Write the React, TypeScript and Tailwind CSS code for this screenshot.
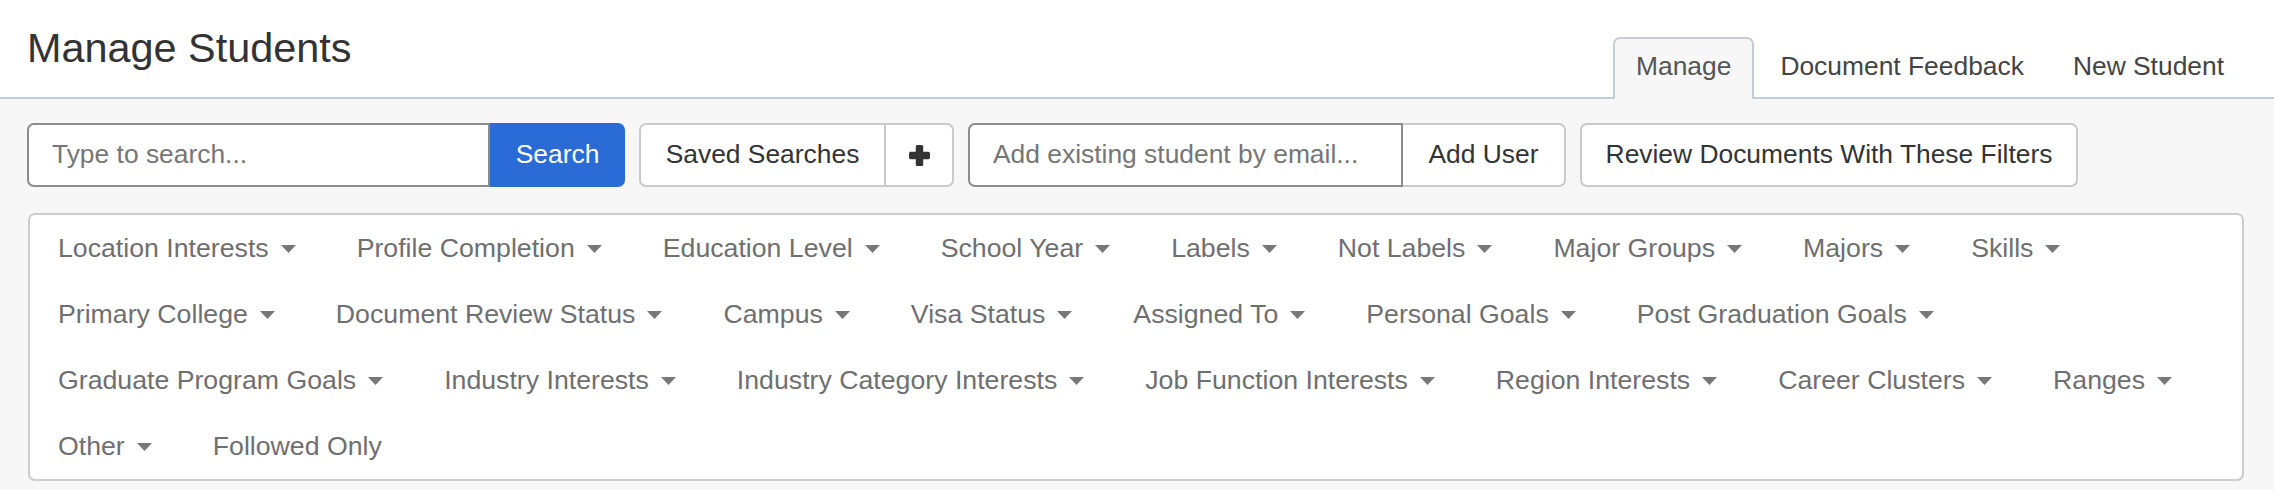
import React from "react";

const FILTERS: { label: string; caret: boolean }[] = [
  "Location Interests",
  "Profile Completion",
  "Education Level",
  "School Year",
  "Labels",
  "Not Labels",
  "Major Groups",
  "Majors",
  "Skills",
  "Primary College",
  "Document Review Status",
  "Campus",
  "Visa Status",
  "Assigned To",
  "Personal Goals",
  "Post Graduation Goals",
  "Graduate Program Goals",
  "Industry Interests",
  "Industry Category Interests",
  "Job Function Interests",
  "Region Interests",
  "Career Clusters",
  "Ranges",
  "Other",
]
  .map((label) => ({ label, caret: true }))
  .concat([{ label: "Followed Only", caret: false }]);

const TABS = ["Manage", "Document Feedback", "New Student"];

function Caret() {
  return (
    <svg width="15" height="8" viewBox="0 0 15 8" className="ml-[12px] mt-[2px] shrink-0">
      <path d="M0 0h15L7.5 8z" fill="#777777" />
    </svg>
  );
}

function PlusIcon() {
  return (
    <svg width="21" height="21" viewBox="0 0 21 21">
      <rect x="6.8" y="0" width="7.4" height="21" rx="1.6" fill="#333333" />
      <rect x="0" y="6.8" width="21" height="7.4" rx="1.6" fill="#333333" />
    </svg>
  );
}

export default function App() {
  const activeTab = "Manage";

  return (
    <div className="min-h-screen bg-[#f7f7f7] font-['Liberation_Sans',Arial,sans-serif] text-[26.4px] text-[#333333]">
      {/* header */}
      <div className="flex h-[99px] justify-between border-b-2 border-[#c4ccd5] bg-white px-[27px]">
        <h1 className="pt-[24px] text-[41.4px] leading-[48px] font-normal text-[#333333]">
          Manage Students
        </h1>
        <div className="flex items-end gap-[3px]">
          {TABS.map((tab) => (
            <div
              key={tab}
              className={
                tab === activeTab
                  ? "relative -mb-[2px] h-[62px] rounded-t-[7px] border-x-2 border-t-2 border-[#c4ccd5] bg-[#f7f7f7] px-[21px] pt-[12px] leading-[30px] text-[#555555]"
                  : "relative -mb-[2px] h-[62px] border-x-2 border-t-2 border-transparent px-[21px] pt-[12px] leading-[30px] text-[#444444]"
              }
            >
              {tab}
            </div>
          ))}
        </div>
      </div>

      {/* toolbar */}
      <div className="mt-[24px] flex h-[64px] gap-[14px] px-[27px]">
        <div className="flex">
          <input
            placeholder="Type to search..."
            className="w-[463px] rounded-l-[7px] border-2 border-[#8c8c8c] bg-white px-[23px] text-[#333333] outline-none placeholder:text-[#767676]"
          />
          <button className="w-[135px] rounded-r-[7px] bg-[#2b6bd6] text-white">Search</button>
        </div>

        <div className="flex rounded-[7px] border-2 border-[#cacaca] bg-white">
          <button className="w-[243px]">Saved Searches</button>
          <button className="flex w-[68px] items-center justify-center border-l-2 border-[#cacaca]">
            <PlusIcon />
          </button>
        </div>

        <div className="flex">
          <input
            placeholder="Add existing student by email..."
            className="w-[435px] rounded-l-[7px] border-2 border-[#8c8c8c] bg-white px-[23px] text-[#333333] outline-none placeholder:text-[#767676]"
          />
          <button className="w-[163px] rounded-r-[7px] border-2 border-l-0 border-[#cacaca] bg-white">
            Add User
          </button>
        </div>

        <button className="w-[498px] rounded-[7px] border-2 border-[#cacaca] bg-white">
          Review Documents With These Filters
        </button>
      </div>

      {/* filters */}
      <div className="mt-[26px] ml-[28px] mr-[30px] rounded-[7px] border-2 border-[#cdcdcd] bg-white pl-[28px]">
        <div className="flex flex-wrap gap-x-[61px]">
          {FILTERS.map((f) => (
            <div key={f.label} className="flex h-[66px] items-center text-[26.7px] leading-[30px] text-[#6f6f6f]">
              <span>{f.label}</span>
              {f.caret && <Caret />}
            </div>
          ))}
        </div>
      </div>
    </div>
  );
}
